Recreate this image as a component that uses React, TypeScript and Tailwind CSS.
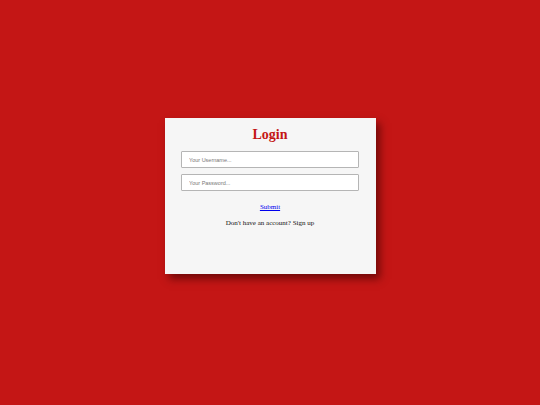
export default function App() {
  return (
    <div className="h-[405px] w-full bg-[#c41615] flex justify-center pt-[118px]">
      <div className="w-[211px] h-[156px] bg-[#f6f6f6] shadow-[4px_5px_8px_rgba(60,0,0,0.6)] flex flex-col items-center px-[17px] font-['Liberation_Serif',serif]">
        <h1 className="mt-[9px] text-[14px] leading-[16px] font-bold text-[#c41615]">Login</h1>
        <input
          className="mt-[8px] w-[178px] h-[17px] bg-white border border-[#b5b5b5] rounded-[1px] px-[7px] text-[5.5px] font-['Liberation_Sans',sans-serif] outline-none placeholder:text-[#777]"
          placeholder="Your Username..."
        />
        <input
          type="password"
          className="mt-[6px] w-[178px] h-[17px] bg-white border border-[#b5b5b5] rounded-[1px] px-[7px] text-[5.5px] font-['Liberation_Sans',sans-serif] outline-none placeholder:text-[#777]"
          placeholder="Your Password..."
        />
        <a href="#" className="mt-[12px] text-[7px] leading-[9px] text-[#0000ee] underline">
          Submit
        </a>
        <p className="mt-[7px] text-[7px] leading-[9px] text-[#111]">
          Don't have an account? Sign up
        </p>
      </div>
    </div>
  );
}
